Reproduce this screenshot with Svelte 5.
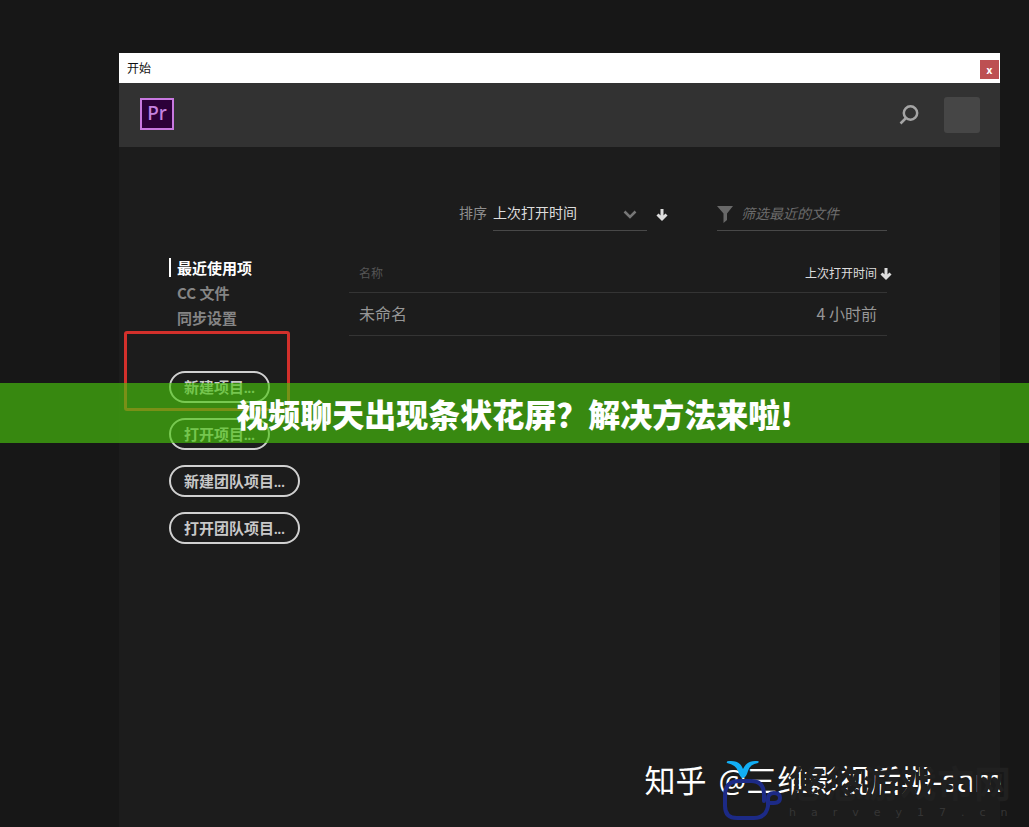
<script>
  const places = ['最近使用项', 'CC 文件', '同步设置'];
  const starters = ['新建项目...', '打开项目...'];
  const teamActions = ['新建团队项目...', '打开团队项目...'];
  const recents = [{ name: '未命名', opened: '4 小时前' }];
  let filter = $state('');
  const shown = $derived(recents.filter((r) => r.name.includes(filter)));
</script>

{#snippet arrow()}
  <svg class="arrow" viewBox="0 0 12 13" aria-hidden="true">
    <path d="M6 0v10M1.500 5.500 6 10l4.500-4.500" />
  </svg>
{/snippet}

<div class="page">
  <section class="window">
    <div class="titlebar">
      <span>开始</span>
      <button class="close" aria-label="关闭">x</button>
    </div>

    <header>
      <div class="logo">Pr</div>
      <button class="search" aria-label="搜索">
        <svg viewBox="0 0 20 20" aria-hidden="true">
          <circle cx="11.500" cy="8" r="6.700" />
          <path d="M7 13 1.500 18.500" />
        </svg>
      </button>
      <button class="avatar" aria-label="帐户"></button>
    </header>

    <div class="body">
      <div class="toolbar">
        <label for="sort">排序</label>
        <div class="select">
          <select id="sort"><option>上次打开时间</option><option>名称</option></select>
          <svg viewBox="0 0 14 9" aria-hidden="true"><path d="M1.500 1.500 7 7l5.500-5.500" /></svg>
        </div>
        <button class="direction" aria-label="排序方向">{@render arrow()}</button>
        <div class="filter">
          <svg viewBox="0 0 16 17" aria-hidden="true"><path d="M0 0h16L10 7.500V14l-3.500 3V7.500z" /></svg>
          <input aria-label="筛选" placeholder="筛选最近的文件" bind:value={filter} />
        </div>
      </div>

      <div class="columns">
        <aside>
          <nav>
            {#each places as place, i}
              <a href="#recent" class:active={i === 0}>{place}</a>
            {/each}
          </nav>
          <div class="actions">
            <div class="marked">
              {#each starters as label}<button class="pill">{label}</button>{/each}
              <span class="marker"></span>
            </div>
            {#each teamActions as label}<button class="pill">{label}</button>{/each}
          </div>
        </aside>

        <table>
          <thead>
            <tr><th>名称</th><th class="opened">上次打开时间{@render arrow()}</th></tr>
          </thead>
          <tbody>
            {#each shown as row}
              <tr><td>{row.name}</td><td class="opened">{row.opened}</td></tr>
            {/each}
          </tbody>
        </table>
      </div>
    </div>
  </section>

  <h1 class="banner">视频聊天出现条状花屏？解决方法来啦!</h1>

  <div class="credit"><span>知乎</span><span>@三维影视后期-sam</span></div>
  <div class="stamp">
    <svg viewBox="0 0 60 62" aria-hidden="true">
      <path class="cup" d="M42 41V35Q42 21 29 21H16Q3 22 3 35V46Q3 58 15 58H32Q44 58 46 46V39Q46 33 52 33Q58 33 58 38Q58 43 52 43H46" />
      <path class="leaf" d="M5 3Q4 1 7 1Q18 0 21 9Q25 0 35 1Q38 1 36 3Q28 4 26 11Q24 18 21 18Q18 18 16 11Q14 5 5 3Z" />
    </svg>
    <div class="words">
      <span class="name">悠悠游戏市网</span>
      <span class="domain">harvey17.cn</span>
    </div>
  </div>
</div>

<style>
  :global(body) { margin: 0; background: #171717; }
  * { box-sizing: border-box; }
  .page {
    position: relative;
    min-height: 100vh;
    display: flex;
    padding: 53px 29px 0 119px;
    overflow: hidden;
    color: #a0a0a0;
    font-family: "Noto Sans CJK SC", sans-serif;
  }
  button, input, select { margin: 0; padding: 0; border: 0; background: none; color: inherit; font: inherit; }
  svg { display: block; fill: none; stroke: currentColor; }
  .window { flex: 1; min-width: 0; background: #1c1c1c; }
  .titlebar {
    display: flex;
    align-items: center;
    justify-content: space-between;
    height: 30px;
    padding: 0 1px 0 8px;
    background: #fff;
    color: #111;
    font-size: 12px;
    line-height: 20px;
  }
  .close {
    width: 19px;
    height: 19px;
    margin-top: 3px;
    background: #bd5052;
    color: #fff;
    font: bold 10px/18px "Open Sans", sans-serif;
  }
  header {
    display: flex;
    align-items: center;
    height: 64px;
    padding: 0 20px 0 21px;
    background: #323232;
  }
  .logo {
    width: 34px;
    height: 32px;
    margin-bottom: 3px;
    border: 2px solid #c878e0;
    background: #2c0039;
    color: #c582df;
    font: 500 19px/27px "Noto Sans", sans-serif;
    text-align: center;
  }
  .search { margin-left: auto; color: #a5a5a5; }
  .search svg { width: 20px; height: 20px; stroke-width: 2.5; }
  .avatar { width: 36px; height: 36px; margin-left: 25px; border-radius: 3px; background: #464646; }
  .body { padding: 52px 113px 0 50px; }
  .toolbar {
    display: flex;
    justify-content: flex-end;
    height: 32px;
    font-size: 14px;
    line-height: 26px;
  }
  .toolbar label { margin-right: 6px; color: #8e8e8e; }
  .select {
    display: flex;
    align-items: center;
    width: 154px;
    border-bottom: 1px solid #484848;
    color: #ddd;
  }
  .select select { flex: 1; height: 26px; margin-bottom: 5px; appearance: none; }
  .select svg { width: 14px; height: 9px; margin-right: 10px; color: #777; stroke-width: 2.5; }
  .direction { padding: 0 9px; color: #ddd; }
  .arrow { width: 12px; height: 13px; stroke-width: 3; }
  .filter {
    display: flex;
    align-items: center;
    gap: 8px;
    width: 170px;
    margin-left: 40px;
    border-bottom: 1px solid #484848;
  }
  .filter svg { width: 16px; height: 17px; color: #686868; fill: currentColor; stroke: none; }
  .filter input { flex: 1; min-width: 0; height: 28px; margin-bottom: 3px; font-style: italic; }
  .filter input::placeholder { color: #6c6c6c; opacity: 1; }
  .columns { display: grid; grid-template-columns: 180px 1fr; align-items: start; padding-top: 24px; }
  nav { display: grid; font-size: 15px; font-weight: 700; line-height: 25px; }
  nav a { padding-left: 8px; color: #858585; text-decoration: none; }
  nav .active {
    background: linear-gradient(#fff, #fff) 0 center / 2px 19px no-repeat;
    color: #fff;
  }
  .actions, .marked { display: grid; justify-items: start; gap: 15px; }
  .actions { padding-top: 41px; }
  .marked { position: relative; }
  .pill {
    height: 32px;
    padding: 0 13px;
    border: 2px solid #d0d0d0;
    border-radius: 16px;
    color: #c8c8c8;
    font-family: Lato, "Noto Sans CJK SC", sans-serif;
    font-size: 15px;
    font-weight: 700;
    line-height: 28px;
    white-space: nowrap;
  }
  .marker {
    position: absolute;
    top: -40px;
    left: -45px;
    width: 166px;
    height: 80px;
    border: 3px solid #d3302b;
    border-radius: 3px;
    pointer-events: none;
  }
  table { width: 100%; border-collapse: collapse; text-align: left; }
  th, td { padding: 0 10px 1px; border-bottom: 1px solid #343434; font-weight: 400; }
  th { height: 37px; color: #555; font-size: 12px; }
  td { height: 43px; color: #969696; font-size: 16px; }
  .opened { text-align: right; }
  th.opened { padding-right: 0; color: #ddd; }
  th .arrow { display: inline-block; margin: 0 -5px 0 3px; vertical-align: -3px; }
  .banner {
    position: absolute;
    top: 383px;
    left: 0;
    right: 0;
    height: 60px;
    margin: 0;
    background: rgba(72, 197, 12, 0.65);
    color: #fff;
    font-size: 32px;
    font-weight: 900;
    line-height: 60px;
    text-align: center;
  }
  .credit {
    position: absolute;
    right: 26px;
    bottom: 24px;
    display: flex;
    gap: 12px;
    color: #fff;
    font-family: "Open Sans", "Noto Sans CJK SC", sans-serif;
    font-size: 31px;
    line-height: 46px;
    white-space: nowrap;
  }
  .stamp { position: absolute; right: 7px; bottom: 5px; display: flex; gap: 7px; }
  .stamp svg { width: 60px; height: 62px; }
  .cup { stroke: #1c2a86; stroke-width: 4; stroke-linejoin: round; stroke-linecap: round; }
  .leaf { fill: #12aef5; stroke: none; }
  .words { display: flex; flex-direction: column; width: 233px; }
  .name {
    color: #202020;
    font-size: 37px;
    font-weight: 700;
    line-height: 44px;
    white-space: nowrap;
  }
  .domain { color: #353535; font: 11px/18px "DejaVu Sans", sans-serif; letter-spacing: 15px; white-space: nowrap; }
</style>
